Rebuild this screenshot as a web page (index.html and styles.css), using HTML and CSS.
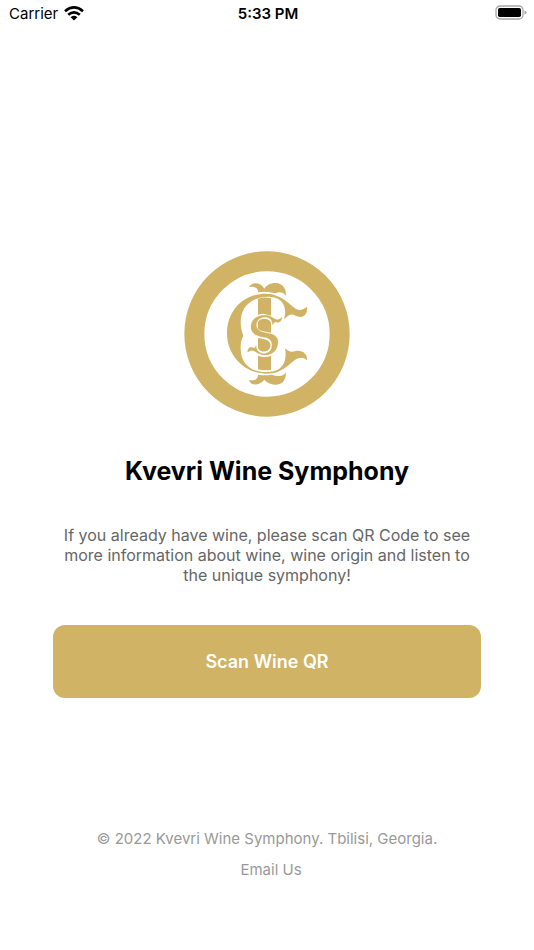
FILE: index.html
```html
<!DOCTYPE html>
<html lang="en">
<head>
<meta charset="utf-8">
<meta name="viewport" content="width=device-width, initial-scale=1">
<title>Kvevri Wine Symphony</title>
<link rel="stylesheet" href="styles.css">
</head>
<body>
<header class="status">
  <div class="carrier">
    <span>Carrier</span>
    <svg class="wifi" viewBox="0 0 20 15" aria-hidden="true">
      <g fill="none" stroke="#000" stroke-width="2.7">
        <path d="M1 5.2Q10-2.4 19 5.2"/>
        <path d="M4.2 8.8Q10 4 15.800 8.800"/>
      </g>
      <path d="M6.600 11.200Q10 8.500 13.400 11.200L10 14.600Z"/>
    </svg>
  </div>
  <time class="clock">5:33 PM</time>
  <svg class="battery" viewBox="0 0 32 16" aria-hidden="true">
    <rect x="1" y="1" width="27" height="13" rx="4" fill="none" stroke="#a6a6a6" stroke-width="1.300"/>
    <rect x="3" y="3" width="23" height="9" rx="1.800"/>
    <path d="M29.500 5.500Q31.500 6 31.500 7.500T29.500 9.500Z" fill="#a6a6a6"/>
  </svg>
</header>
<main class="content">
  <svg class="logo" viewBox="12 15 498 498" role="img" aria-label="Kvevri Wine Symphony logo">
    <circle class="ring" cx="261" cy="264" r="218"/>
    <g class="gold">
      <path d="M206 123C216 107 242 107 253 128C266 106 311 102 317 137L318 149C309 139 298 136 287 142Q255 134 234 139C236 126 222 120 206 123Z"/>
      <path d="M234 386Q255 390 274 386C289 390 301 392 311 386L318 379C318 406 304 417 284 416Q266 415 253 401C241 417 213 423 207 402C224 406 235 398 234 386Z"/>
      <path d="M234 158Q253 152 273 157V371Q253 375 234 370Z"/>
      <path d="M381 182C383 199 376 212 361 213C347 213 338 201 327 208L312 219C321 192 313 164 286 155Q263 149 239 155C199 166 182 194 182 229C182 245 186 258 190 270C184 281 182 291 182 309C183 344 201 371 242 377Q263 380 281 376C313 368 321 338 315 306C325 319 337 318 347 315C367 311 383 324 381 343C369 331 354 334 342 344C321 361 302 378 277 382C206 391 142 338 141 263C141 191 193 143 258 143C297 143 322 168 341 184C356 197 368 192 381 182Z"/>
    </g>
    <path class="cut" d="M250 206C228 206 211 224 211 243C211 262 226 273 246 275C266 278 275 288 270 302C262 322 238 324 229 303L222 318C240 336 276 334 291 312C301 296 298 272 279 265C262 259 236 262 230 247C227 228 250 210 268 222L284 235L304 226L280 214Z"/>
    <g class="gold accent">
      <path d="M306 214C305 226 297 231 288 228C283 227 281 231 278 237C278 224 270 213 255 213C240 213 229 224 229 237C229 253 243 258 259 261C282 264 295 272 294 290C292 315 274 328 252 327C237 326 228 317 221 314C214 312 209 314 203 318C203 306 211 302 218 305C224 308 226 305 228 299C229 314 239 323 253 323C267 322 276 312 276 298C276 280 264 275 249 273C226 269 212 260 213 241C214 220 232 208 253 208C272 208 278 216 286 220C293 223 299 221 306 214Z"/>
    </g>
    <g class="gold">
      <path d="M234 228C240 216 264 214 272 228V257L247 253Q230 246 234 228Z"/>
      <path d="M234 278L260 282Q274 288 271 303C265 321 241 321 234 305Z"/>
    </g>
  </svg>
  <h1 class="title">Kvevri Wine Symphony</h1>
  <p class="intro">If you already have wine, please scan QR Code to see more information about wine, wine origin and listen to the unique symphony!</p>
  <button class="scan" type="button">Scan Wine QR</button>
</main>
<footer class="footer">
  <p class="copyright">© 2022 Kvevri Wine Symphony. Tbilisi, Georgia.</p>
  <a class="email" href="mailto:info@example.com">Email Us</a>
</footer>
</body>
</html>
```
FILE: styles.css
```css
* { box-sizing: border-box; }
body {
  margin: 0;
  min-height: 100vh;
  display: flex;
  flex-direction: column;
  background: #fff;
  color: #000;
  font-family: Inter, "Liberation Sans", sans-serif;
}
.status {
  display: grid;
  grid-template-columns: 1fr auto 1fr;
  align-items: center;
  height: 26px;
  padding: 0 7px 0 9px;
  font-size: 15px;
}
.carrier { display: flex; align-items: center; gap: 6px; }
.wifi { width: 20px; height: 15px; }
.clock { font-weight: 600; }
.battery { width: 32px; height: 16px; justify-self: end; }
.content {
  flex: 1;
  display: flex;
  flex-direction: column;
  align-items: center;
  justify-content: center;
  padding: 93px 53px 0;
  text-align: center;
}
.logo { width: 166px; height: 166px; }
.ring { fill: none; stroke: #d0b365; stroke-width: 60; }
.gold { fill: #d0b365; }
.accent { stroke: #d0b365; stroke-width: 1; }
.cut { fill: #fff; stroke: #fff; stroke-width: 6; }
.title {
  margin: 38px 0 0;
  font-size: 25px;
  line-height: 32px;
  font-weight: 700;
}
.intro {
  margin: 38px 0 0;
  color: #666;
  font-size: 16px;
  line-height: 20px;
}
.scan {
  width: 100%;
  height: 73px;
  margin-top: 40px;
  border: 0;
  border-radius: 12px;
  background: #d0b365;
  color: #fff;
  font: inherit;
  font-size: 18px;
  font-weight: 600;
}
.footer {
  display: flex;
  flex-direction: column;
  align-items: center;
  gap: 11px;
  padding: 0 20px 70px;
  color: #999;
  font-size: 15px;
  line-height: 20px;
}
.copyright { margin: 0; }
.email { color: inherit; text-decoration: none; margin-left: 8px; }
```
